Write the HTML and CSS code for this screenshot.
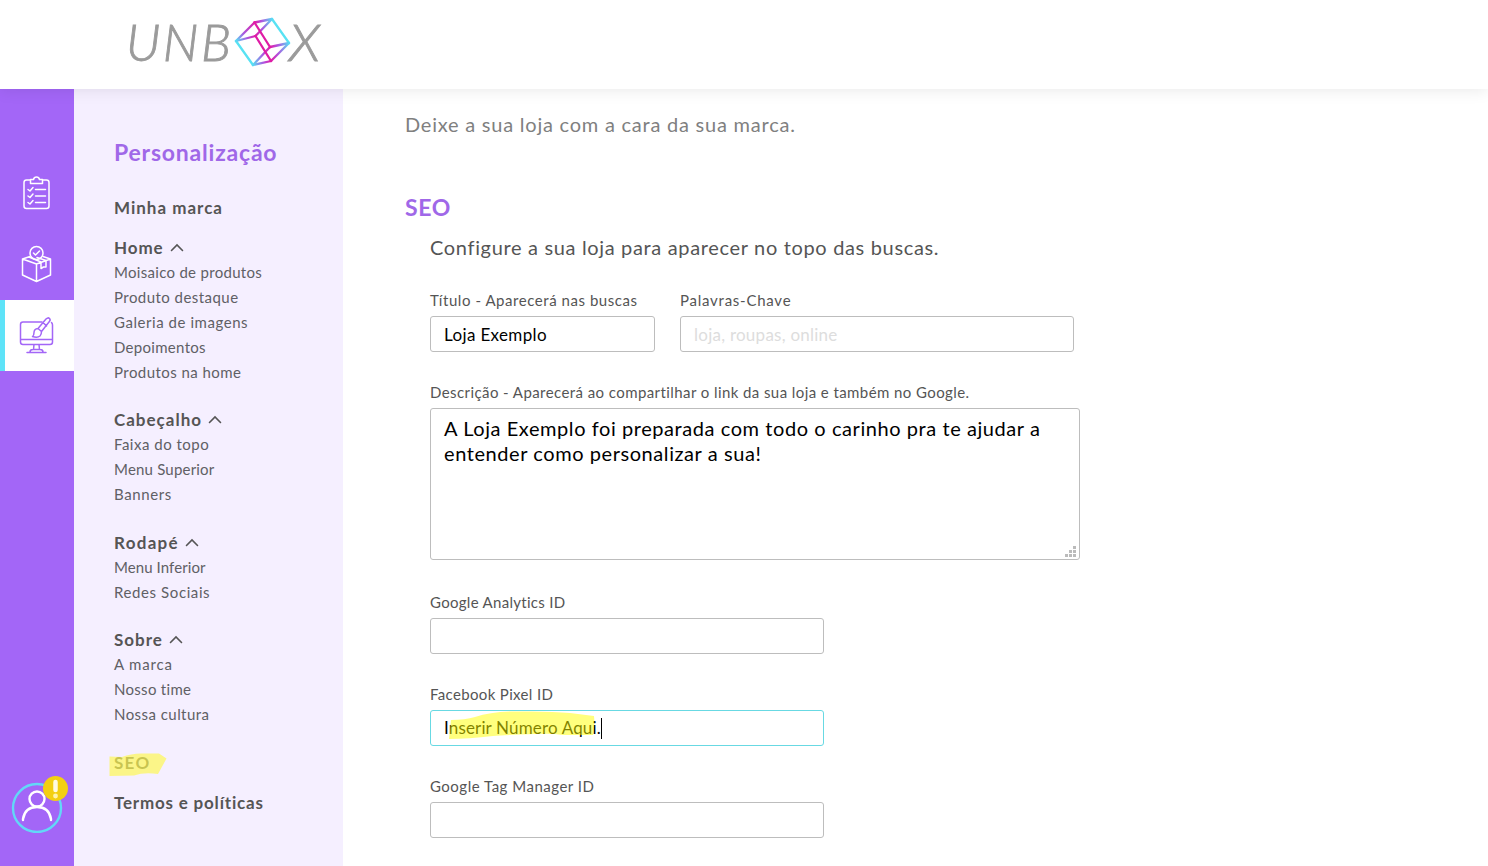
FILE: index.html
```
<!DOCTYPE html>
<html lang="pt-BR">
<head>
<meta charset="utf-8">
<title>Unbox - Personalização</title>
<link rel="stylesheet" href="styles.css">
</head>
<body>
<header class="topbar">
  <svg class="logo" width="200" height="60" viewBox="125 12 200 60" role="img" aria-label="Unbox">
    <defs>
      <linearGradient id="gTop" x1="0" y1="1" x2="1" y2="0"><stop offset="0" stop-color="#55dff5"/><stop offset=".4" stop-color="#a65be0"/><stop offset="1" stop-color="#de1ea8"/></linearGradient>
      <linearGradient id="gFade" x1="0" y1="0" x2="1" y2="0"><stop offset="0" stop-color="#e01ca5"/><stop offset=".4" stop-color="#b052df"/><stop offset="1" stop-color="#58dcf4"/></linearGradient>
      <linearGradient id="gBack" x1="1" y1="0" x2="0" y2="0"><stop offset="0" stop-color="#e01ca5"/><stop offset=".4" stop-color="#b052df"/><stop offset="1" stop-color="#58dcf4"/></linearGradient>
    </defs>
    <text class="logo-text" x="126" y="61" textLength="105">UNB</text>
    <text class="logo-text" x="289" y="61" textLength="31" lengthAdjust="spacingAndGlyphs">X</text>
    <g fill="none" stroke-width="2.3" stroke-linejoin="round" stroke-linecap="round">
      <path stroke="#58e2f3" d="M272 19 289 43M236 41l17 24"/>
      <path stroke="url(#gTop)" d="M236 41 254.500 22.500"/>
      <path stroke="url(#gFade)" d="M254.500 22.500 272 19"/>
      <path stroke="url(#gFade)" d="M255.500 36 272 19"/>
      <path stroke="url(#gBack)" d="M236 41 255.500 36"/>
      <path stroke="url(#gBack)" d="M253 65 270 47"/>
      <path stroke="url(#gFade)" d="M270 47 289 43"/>
      <path stroke="url(#gFade)" d="M271 61 289 43"/>
      <path stroke="url(#gBack)" d="M253 65 271 61"/>
      <path stroke="#df1ca5" d="M254.500 22.500 270 47M255.500 36 271 61"/>
    </g>
  </svg>
</header>
<div class="layout">
  <nav class="rail">
    <a class="rail-item">
      <svg width="40" height="40" viewBox="16 173 40 40" class="icon">
        <path d="M30 180h-3.500q-2.500 0-2.500 2.500v23.500q0 2.500 2.500 2.500h20q2.500 0 2.500-2.500v-23.500q0-2.500-2.500-2.500H43"/>
        <path d="M30.500 183.500v-4h3q.500-2.500 3-2.500t3 2.500h3v4zM35.500 189.500h10M35.500 196h10M35.500 202.500h10M28 189.500l2 1.500 3-3.500M28 196l2 1.500 3-3.500M28 202.500l2 1.500 3-3.500"/>
      </svg>
    </a>
    <a class="rail-item">
      <svg width="40" height="40" viewBox="16 244 40 40" class="icon">
        <circle cx="36.500" cy="253" r="6.500"/>
        <path d="m33.500 253 2 2 4-4M30 256.500l-7.500 2.500v16l14 6.500 14-6.500v-16l-7.500-2.500M22.500 259l14 5 14-5M36.500 264v17M29 257l12 5M41 262.500v6l2.500-1.500 2.500 0v-6.500M46 260.500l-9-3"/>
      </svg>
    </a>
    <a class="rail-item rail-item-active">
      <svg width="40" height="40" viewBox="16 315 40 40" class="icon">
        <path d="M42 322H23q-2.500 0-2.500 2.500v17.500q0 2.500 2.500 2.500h27q2.500 0 2.500-2.500v-17q0-1.500-1-2.500M20.500 339.500h32M34 344.500l-.500 5M39 344.500l.500 5M30 352q0-2.500 3-2.500h7q3 0 3 2.500M27 352.500h19"/>
        <path d="m38 328.500 8-9.500q2-2 3.500-.500 1.500 1.500-.500 3.500l-7.500 9.500zM43 322.500l3.500 3.500M38 328.500q-4 .500-4 4 0 3-1.500 4 5 1.500 7.500-.500 1.500-1.500 1.500-4.500"/>
      </svg>
    </a>
    <a class="profile">
      <svg width="58" height="58" viewBox="11 775 58 58">
        <circle class="profile-ring" cx="37" cy="808" r="24"/>
        <circle class="profile-body" cx="37" cy="799" r="7.500"/>
        <path class="profile-body" d="M23 820v-1q2-12 14-12t14 12v1"/>
        <circle cx="55.500" cy="788.500" r="12.500" fill="#f3cf12"/>
        <path d="M55.500 782v8" stroke="#fffbe2" stroke-width="4.500" stroke-linecap="round"/>
        <circle cx="55.500" cy="796" r="2.400" fill="#fff3ac"/>
      </svg>
    </a>
  </nav>
  <aside class="menu">
    <h1 class="menu-title">Personalização</h1>
    <a class="menu-head menu-brand"><span class="ls-100">Minha marca</span></a>
    <div class="group">
      <a class="menu-head"><span class="ls-90">Home</span><svg class="chev" width="14" height="9" viewBox="0 0 14 9"><path d="M1.500 7.500 7 2l5.500 5.500"/></svg></a>
      <a class="menu-link ls-30">Moisaico de produtos</a>
      <a class="menu-link ls-45">Produto destaque</a>
      <a class="menu-link ls-55">Galeria de imagens</a>
      <a class="menu-link ls-30">Depoimentos</a>
      <a class="menu-link ls-45">Produtos na home</a>
    </div>
    <div class="group">
      <a class="menu-head"><span class="ls-100">Cabeçalho</span><svg class="chev" width="14" height="9" viewBox="0 0 14 9"><path d="M1.500 7.500 7 2l5.500 5.500"/></svg></a>
      <a class="menu-link ls-50">Faixa do topo</a>
      <a class="menu-link ls-20">Menu Superior</a>
      <a class="menu-link ls-60">Banners</a>
    </div>
    <div class="group">
      <a class="menu-head"><span class="ls-130">Rodapé</span><svg class="chev" width="14" height="9" viewBox="0 0 14 9"><path d="M1.500 7.500 7 2l5.500 5.500"/></svg></a>
      <a class="menu-link ls-10">Menu Inferior</a>
      <a class="menu-link ls-60">Redes Sociais</a>
    </div>
    <div class="group">
      <a class="menu-head"><span class="ls-100">Sobre</span><svg class="chev" width="14" height="9" viewBox="0 0 14 9"><path d="M1.500 7.500 7 2l5.500 5.500"/></svg></a>
      <a class="menu-link ls-80">A marca</a>
      <a class="menu-link ls-30">Nosso time</a>
      <a class="menu-link ls-45">Nossa cultura</a>
    </div>
    <a class="menu-head menu-seo"><span class="ls-130">SEO</span>
      <svg class="mark-seo" width="60" height="26" viewBox="108 751 60 26"><path d="M109.500 756.500 122 757q10-4 22-3.500h15l7.500 5-8.500 15.500q-14-2-24 1.500l-24.500.500z"/></svg>
    </a>
    <a class="menu-head"><span class="ls-80">Termos e políticas</span></a>
  </aside>
  <main class="content">
    <p class="lead">Deixe a sua loja com a cara da sua marca.</p>
    <h2 class="section-title">SEO</h2>
    <form class="form">
      <p class="intro">Configure a sua loja para aparecer no topo das buscas.</p>
      <div class="row">
        <label class="field w225"><span class="label ls-55">Título - Aparecerá nas buscas</span><span class="box ls-35">Loja Exemplo</span></label>
        <label class="field w394"><span class="label ls-75">Palavras-Chave</span><span class="box placeholder">loja, roupas, online</span></label>
      </div>
      <label class="field w650"><span class="label ls-42">Descrição - Aparecerá ao compartilhar o link da sua loja e também no Google.</span>
        <span class="area">A Loja Exemplo foi preparada com todo o carinho pra te ajudar a<br>entender como personalizar a sua!
          <svg class="grip" width="11" height="11" viewBox="0 0 11 11"><path d="M8 0h3v3H8zM4 4h3v3H4zM8 4h3v3H8zM0 8h3v3H0zM4 8h3v3H4zM8 8h3v3H8z"/></svg>
        </span>
      </label>
      <label class="field w394"><span class="label ls-30">Google Analytics ID</span><span class="box"></span></label>
      <label class="field w394"><span class="label ls-35">Facebook Pixel ID</span><span class="box focus"><span class="typed">Inserir Número Aqui.</span><i class="caret"></i>
        <svg class="mark-pixel" width="150" height="30" viewBox="446 710 150 30"><path d="M451 720q14 0 24-3 18-6 45-5.500 30-.5 50 1.500l24 3q1 9-1 19h-30q-12-2-27-1-30 1-43 2-25 3-44 3z"/></svg></span></label>
      <label class="field w394"><span class="label ls-50">Google Tag Manager ID</span><span class="box"></span></label>
    </form>
  </main>
</div>
</body>
</html>
```
FILE: styles.css
```
* { box-sizing: border-box; }
body {
  margin: 0;
  height: 866px;
  overflow: hidden;
  background: #fff;
  color: #555;
  font-family: Lato, "Open Sans", sans-serif;
  display: flex;
  flex-direction: column;
}
.topbar { position: relative; z-index: 2; flex: none; height: 89px; padding: 12px 0 0 125px; background: #fff; box-shadow: 0 0 16px rgba(0,0,0,.1); }
.logo { display: block; }
.logo-text { font: italic 300 51px Lato, sans-serif; fill: #9b9b9b; stroke: #9b9b9b; stroke-width: .9px; }
.layout { flex: 1; display: flex; min-height: 0; }
.rail { width: 74px; background: #a366f7; display: flex; flex-direction: column; padding-top: 69px; }
.rail-item { height: 71px; display: flex; align-items: center; padding: 0 0 2px 16px; }
.rail-item-active { background: #fff; border-left: 5px solid #5ee3f8; padding-left: 11px; }
.icon { fill: none; stroke: #fff; stroke-width: 1.5; stroke-linecap: round; stroke-linejoin: round; }
.rail-item-active .icon { stroke: #a366f7; }
.profile { margin: auto 0 33px 11px; height: 58px; }
.profile-ring { fill: none; stroke: #62d8f7; stroke-width: 2.4; }
.profile-body { fill: none; stroke: #fff; stroke-width: 2.4; stroke-linecap: round; }
.menu { width: 269px; background: #f5efff; padding: 48px 0 0 40px; }
.menu-title { margin: 0 0 28px; font-size: 23px; line-height: 30px; font-weight: 700; letter-spacing: .79px; color: #a068e8; }
.menu-head { display: flex; align-items: center; gap: 6px; height: 25px; font-size: 17px; font-weight: 700; color: #555; }
.menu-brand { margin-bottom: 15px; }
.chev { fill: none; stroke: #555; stroke-width: 1.6; stroke-linecap: round; }
.menu-link { display: block; height: 25px; line-height: 25px; font-size: 15px; color: #606065; }
.group { margin-bottom: 22px; }
.group:nth-of-type(even) { margin-bottom: 23px; }
.menu-seo { position: relative; margin-bottom: 15px; }
.mark-seo { position: absolute; left: -6px; top: 1px; fill: #fff950; opacity: .68; }
.content { flex: 1; padding: 22px 0 0 62px; }
.lead { margin: 0; font-size: 20px; line-height: 26px; letter-spacing: .77px; color: #808080; }
.section-title { margin: 55px 0 0; font-size: 23px; line-height: 30px; letter-spacing: .6px; color: #a068e8; }
.form { padding-left: 25px; }
.intro { margin: 12px 0 28px; font-size: 20px; line-height: 26px; letter-spacing: .66px; color: #555; }
.row { display: flex; gap: 25px; }
.field { display: block; margin-bottom: 28px; }
.w225 { width: 225px; }
.w394 { width: 394px; }
.w650 { width: 650px; margin-bottom: 30px; }
.label { display: block; height: 28px; line-height: 25px; font-size: 15px; white-space: nowrap; }
.box { position: relative; display: flex; align-items: center; height: 36px; border: 1px solid #bdbdbd; border-radius: 3px; padding-left: 13px; font-size: 17px; color: #000; }
.placeholder { color: #ddd; letter-spacing: .25px; }
.focus { border-color: #68d9e3; }
.typed { padding-bottom: 2px; letter-spacing: .15px; }
.caret { width: 1px; height: 21px; background: #000; }
.mark-pixel { position: absolute; left: 15px; top: -1px; fill: #ff0; opacity: .5; }
.area { position: relative; display: block; height: 152px; border: 1px solid #bdbdbd; border-radius: 3px; padding: 7px 13px; font-size: 20px; line-height: 25px; letter-spacing: .57px; color: #000; white-space: nowrap; }
.grip { position: absolute; right: 3px; bottom: 2px; fill: #bbb; }
.ls-10 { letter-spacing: .08px; }
.ls-20 { letter-spacing: .2px; }
.ls-30 { letter-spacing: .3px; }
.ls-35 { letter-spacing: .35px; }
.ls-42 { letter-spacing: .42px; }
.ls-45 { letter-spacing: .45px; }
.ls-50 { letter-spacing: .5px; }
.ls-55 { letter-spacing: .55px; }
.ls-60 { letter-spacing: .6px; }
.ls-75 { letter-spacing: .75px; }
.ls-80 { letter-spacing: .8px; }
.ls-90 { letter-spacing: .9px; }
.ls-100 { letter-spacing: 1px; }
.ls-130 { letter-spacing: 1.3px; }
```
